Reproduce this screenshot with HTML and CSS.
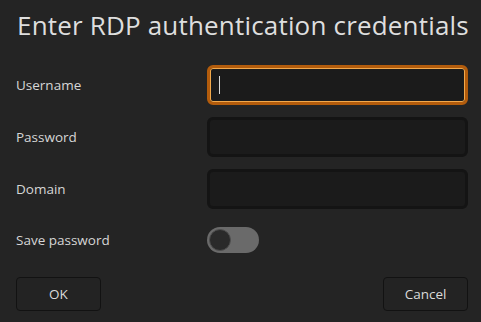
FILE: index.html
```html
<!DOCTYPE html>
<html lang="en">
<head>
  <meta charset="UTF-8">
  <meta name="viewport" content="width=device-width, initial-scale=1.0">
  <title>RDP authentication</title>
  <link rel="stylesheet" href="styles.css">
</head>
<body>
  <div class="dialog">
    <h1 class="title">Enter RDP authentication credentials</h1>

    <div class="form">
      <label class="label" for="username">Username</label>
      <div class="field focused"><span class="caret"></span></div>

      <label class="label" for="password">Password</label>
      <div class="field"></div>

      <label class="label" for="domain">Domain</label>
      <div class="field"></div>

      <span class="label switch-row">Save password</span>
      <div class="toggle-cell switch-row">
        <div class="toggle"><span class="knob"></span></div>
      </div>
    </div>

    <div class="buttons">
      <button class="btn">OK</button>
      <button class="btn">Cancel</button>
    </div>
  </div>
</body>
</html>
```

FILE: styles.css
```css
body {
  margin: 0;
  padding: 0;
  background-color: #242424;
  color: #dcdcdc;
  font-family: "Open Sans", "Noto Sans", sans-serif;
  overflow: hidden;
}
.dialog {
  padding: 6px 14px 0 16px;
}
.title {
  margin: 0 0 0 1px;
  font-size: 26px;
  font-weight: 400;
  line-height: 38px;
  color: #dedede;
  letter-spacing: 0.18px;
  white-space: nowrap;
}
.form {
  margin-top: 21px;
  display: grid;
  grid-template-columns: 191px 261px;
  row-gap: 12px;
  align-items: center;
}
.label {
  font-size: 13.5px;
  color: #d6d6d6;
}
.field {
  box-sizing: border-box;
  height: 40px;
  background: #1b1b1b;
  border: 3px solid #141414;
  border-radius: 6px;
  display: flex;
  align-items: center;
}
.field.focused {
  border-color: #b35c0c;
  box-shadow: inset 0 0 0 1px #f2a94c;
}
.caret {
  width: 1px;
  height: 18px;
  margin-left: 9px;
  background: #d8d8d8;
}
.switch-row {
  margin-top: 6px;
}
.toggle-cell {
  height: 26px;
}
.toggle {
  box-sizing: border-box;
  width: 52px;
  height: 26px;
  border-radius: 13px;
  background: #6a6a6a;
  padding: 2px;
}
.knob {
  display: block;
  box-sizing: border-box;
  width: 22px;
  height: 22px;
  border-radius: 50%;
  background: #2a2a2a;
  border: 1px solid #4e4e4e;
}
.buttons {
  display: flex;
  justify-content: space-between;
  margin-top: 24px;
  width: 452px;
}
.btn {
  width: 85px;
  height: 34px;
  background: #232323;
  border: 1px solid #121212;
  border-radius: 4px;
  color: #dadada;
  font-family: "Open Sans", "Noto Sans", sans-serif;
  font-size: 13.5px;
  padding: 0;
}
```
